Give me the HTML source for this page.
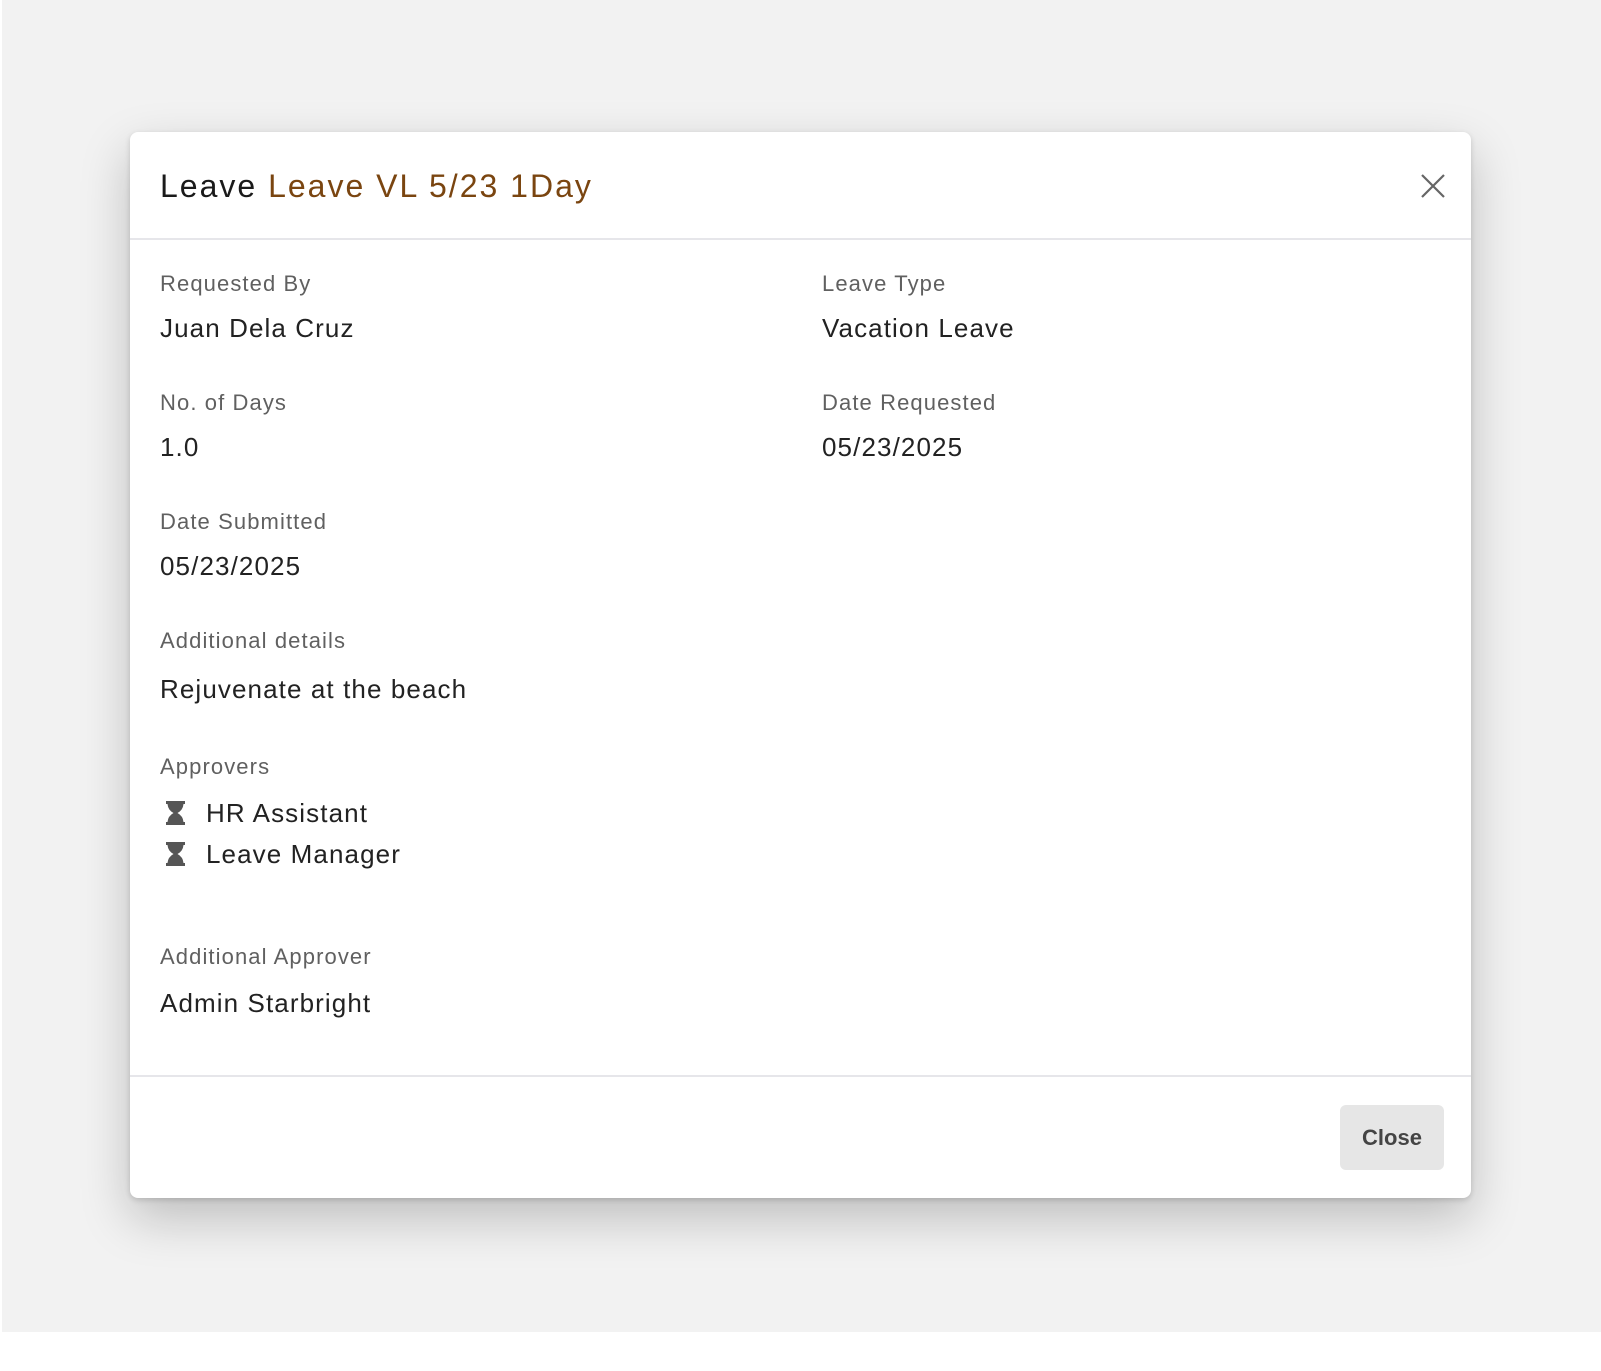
<!DOCTYPE html>
<html><head><meta charset="utf-8"><style>
*{margin:0;padding:0;box-sizing:border-box}
body{width:1601px;height:1371px;background:#fff;position:relative;overflow:hidden;font-family:"Liberation Sans",sans-serif}
.bg{position:absolute;left:2px;top:0;width:1599px;height:1332px;background:#f2f2f2}
.modal{position:absolute;left:130px;top:132px;width:1341px;height:1066px;background:#fff;border-radius:8px;box-shadow:0 20px 50px rgba(0,0,0,.22),0 2px 6px rgba(0,0,0,.15)}
.t{position:absolute;white-space:nowrap;line-height:1;transform:translateY(-50%)}
.lab{font-size:22px;color:#606060;letter-spacing:1.1px}
.val{font-size:26px;color:#222;letter-spacing:1.1px}
.hr{position:absolute;left:0;width:100%;height:2px;background:#e6e6ea}
.btn{position:absolute;left:1210px;top:973px;width:104px;height:65px;background:#e6e6e6;border-radius:6px;font-size:22px;font-weight:bold;color:#444;display:flex;align-items:center;justify-content:center}
</style></head><body>
<div class="bg"></div>
<div class="modal">
<div class="t" style="left:30px;top:54px;font-size:32px;color:#1a1a1a;letter-spacing:2px">Leave <span style="color:#7a4510">Leave VL 5/23 1Day</span></div>
<svg style="position:absolute;left:1290px;top:41px" width="26" height="26" viewBox="0 0 26 26"><path d="M2 2L24 24M24 2L2 24" stroke="#666" stroke-width="2.2"/></svg>
<div class="hr" style="top:106px"></div>
<div class="t lab" style="left:30px;top:152px">Requested By</div>
<div class="t val" style="left:30px;top:196px">Juan Dela Cruz</div>
<div class="t lab" style="left:692px;top:152px">Leave Type</div>
<div class="t val" style="left:692px;top:196px">Vacation Leave</div>
<div class="t lab" style="left:30px;top:271px">No. of Days</div>
<div class="t val" style="left:30px;top:315px">1.0</div>
<div class="t lab" style="left:692px;top:271px">Date Requested</div>
<div class="t val" style="left:692px;top:315px">05/23/2025</div>
<div class="t lab" style="left:30px;top:390px">Date Submitted</div>
<div class="t val" style="left:30px;top:434px">05/23/2025</div>
<div class="t lab" style="left:30px;top:509px">Additional details</div>
<div class="t val" style="left:30px;top:557px">Rejuvenate at the beach</div>
<div class="t lab" style="left:30px;top:635px">Approvers</div>
<svg style="position:absolute;left:35px;top:669px" width="21" height="24" viewBox="0 0 21 24"><path d="M1 0H20V3H18.5Q18 9 12.5 12Q18 15 18.5 21H20V24H1V21H2.5Q3 15 8.5 12Q3 9 2.5 3H1Z" fill="#555"/></svg>
<div class="t val" style="left:76px;top:681px">HR Assistant</div>
<svg style="position:absolute;left:35px;top:710px" width="21" height="24" viewBox="0 0 21 24"><path d="M1 0H20V3H18.5Q18 9 12.5 12Q18 15 18.5 21H20V24H1V21H2.5Q3 15 8.5 12Q3 9 2.5 3H1Z" fill="#555"/></svg>
<div class="t val" style="left:76px;top:722px">Leave Manager</div>
<div class="t lab" style="left:30px;top:825px">Additional Approver</div>
<div class="t val" style="left:30px;top:871px">Admin Starbright</div>
<div class="hr" style="top:943px"></div>
<div class="btn">Close</div>
</div>
</body></html>
